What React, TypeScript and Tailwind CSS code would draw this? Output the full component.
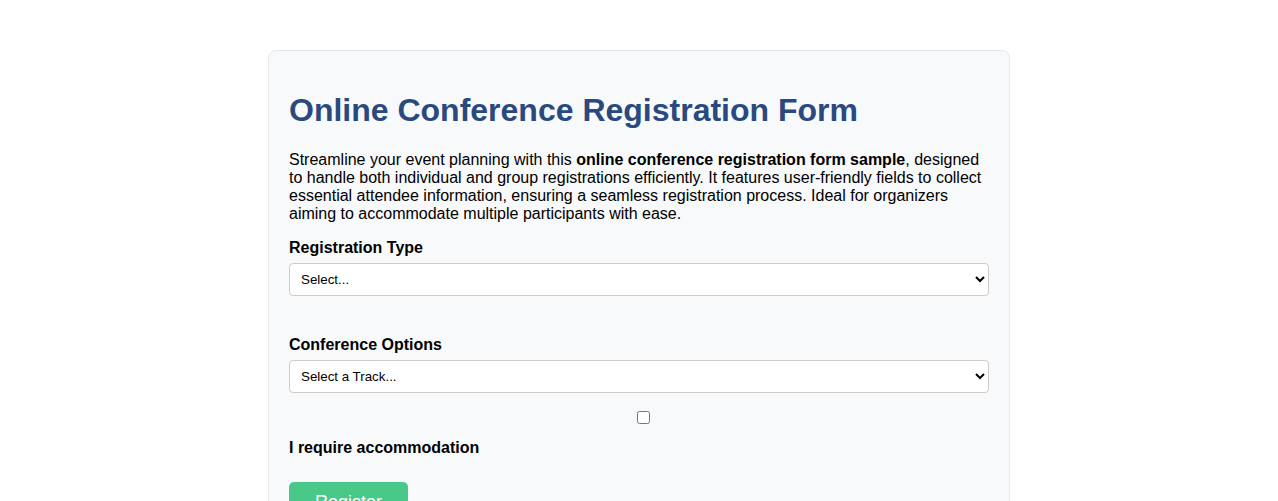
export default function App() {
  return (
    <div className="min-h-screen bg-white pt-[50px] font-['Liberation_Sans',Arial,sans-serif] text-black">
      <div className="mx-auto w-[742px] rounded-lg border border-[#e6e8ea] bg-[#f8f9fa] p-5">
        <h1 className="mt-[21px] mb-[22px] text-[32px] font-bold leading-[37px] text-[#2a4a7f]">
          Online Conference Registration Form
        </h1>
        <p className="mb-[16px] text-base leading-[18px]">
          Streamline your event planning with this <strong>online conference registration form sample</strong>,
          designed to handle both individual and group registrations efficiently. It features user-friendly fields
          to collect essential attendee information, ensuring a seamless registration process. Ideal for organizers
          aiming to accommodate multiple participants with ease.
        </p>

        <div className="mb-[40px]">
          <label className="mb-[6px] block text-base font-bold leading-[18px]">Registration Type</label>
          <select className="block h-[33px] w-full rounded border border-[#ccc] bg-white px-[7px] text-[13.33px]">
            <option>Select...</option>
          </select>
        </div>

        <div>
          <label className="mb-[6px] block text-base font-bold leading-[18px]">Conference Options</label>
          <select className="block h-[33px] w-full rounded border border-[#ccc] bg-white px-[7px] text-[13.33px]">
            <option>Select a Track...</option>
          </select>
        </div>

        <div className="flex justify-center pt-[18px] pb-[15px] pl-2">
          <input type="checkbox" className="m-0 h-[13px] w-[13px]" />
        </div>

        <label className="block text-base font-bold leading-[18px]">I require accommodation</label>

        <button className="mt-[25px] rounded-[5px] bg-[#48c98a] px-[26px] py-[10px] text-lg leading-[21px] text-white">
          Register
        </button>
      </div>
    </div>
  );
}
